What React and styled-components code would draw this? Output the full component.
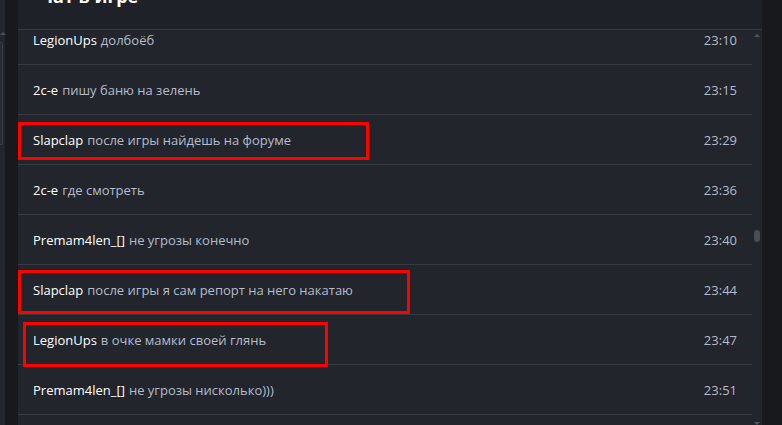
import React from "react";
import styled, { createGlobalStyle } from "styled-components";

const GlobalStyle = createGlobalStyle`
    html, body {
        margin: 0;
        padding: 0;
        background: #18191c;
        overflow: hidden;
    }
    * {
        box-sizing: border-box;
    }
`;

const Screen = styled.div`
    display: flex;
    flex-direction: row;
    width: 782px;
    height: 425px;
    background: #18191c;
    font-family: "Open Sans", "Noto Sans", sans-serif;
`;

const SidePane = styled.div`
    width: 5px;
    height: 100%;
    background: #24262d;
    display: flex;
    flex-direction: column;
    align-items: flex-start;
    padding-top: 32px;
`;

const SideArrow = styled.div`
    width: 0;
    height: 0;
    border-left: 3px solid transparent;
    border-right: 3px solid transparent;
    border-bottom: 3px solid #4b4e55;
`;

const SideThumb = styled.div`
    width: 3px;
    height: 103px;
    margin-top: 7px;
    border: 1px solid #3b3e45;
    border-left: none;
    border-radius: 0 2px 2px 0;
    background: #2a2c33;
`;

const Gap = styled.div`
    width: 13px;
`;

const ChatPanel = styled.div`
    width: 744px;
    height: 100%;
    display: flex;
    flex-direction: column;
    overflow: hidden;
    background: #22252c;
`;

const Header = styled.div`
    height: 30px;
    flex-shrink: 0;
    background: #1f2128;
    border-bottom: 1px solid #373a41;
    padding-left: 22px;
    overflow: hidden;
    position: relative;
    z-index: 1;
`;

const Title = styled.div`
    color: #ffffff;
    font-size: 18px;
    font-weight: 700;
    line-height: 18px;
    margin-top: -13px;
`;

const Body = styled.div`
    flex: 1;
    display: flex;
    flex-direction: row;
    overflow: hidden;
`;

const List = styled.div`
    width: 734px;
    margin-top: -15px;
    display: flex;
    flex-direction: column;
`;

const Row = styled.div`
    position: relative;
    height: 50px;
    flex-shrink: 0;
    display: flex;
    align-items: center;
    justify-content: space-between;
    padding: 0 15px;
    border-bottom: 1px solid #373a41;
    font-size: 13px;
`;

const Message = styled.div`
    color: #b4bccb;
`;

const Author = styled.span`
    color: #ffffff;
    margin-right: 4px;
`;

const Time = styled.div`
    color: #b4bccb;
`;

const Highlight = styled.div`
    position: absolute;
    left: ${(p) => p.$left}px;
    top: ${(p) => p.$top}px;
    width: ${(p) => p.$width}px;
    height: ${(p) => p.$height}px;
    border: 3px solid #ff0000;
    pointer-events: none;
`;

const ScrollTrack = styled.div`
    width: 10px;
    display: flex;
    flex-direction: column;
    align-items: center;
    justify-content: space-between;
    padding: 4px 0 0 0;
    background: #22252c;
`;

const Arrow = styled.div`
    width: 0;
    height: 0;
    border-left: 3px solid transparent;
    border-right: 3px solid transparent;
    ${(p) =>
        p.$down
            ? "border-top: 3px solid #53565d;"
            : "border-bottom: 3px solid #53565d;"}
`;

const Thumb = styled.div`
    width: 6px;
    height: 12px;
    border-radius: 3px;
    background: #4a4d55;
    margin-top: 193px;
`;

const Spacer = styled.div`
    flex: 1;
`;

const messages = [
    { author: "LegionUps", text: "долбоёб", time: "23:10" },
    { author: "2c-e", text: "пишу баню на зелень", time: "23:15" },
    {
        author: "Slapclap",
        text: "после игры найдешь на форуме",
        time: "23:29",
        box: { left: 0, top: 7, width: 351, height: 38 },
    },
    { author: "2c-e", text: "где смотреть", time: "23:36" },
    { author: "Premam4len_[]", text: "не угрозы конечно", time: "23:40" },
    {
        author: "Slapclap",
        text: "после игры я сам репорт на него накатаю",
        time: "23:44",
        box: { left: 0, top: 5, width: 392, height: 44 },
    },
    {
        author: "LegionUps",
        text: "в очке мамки своей глянь",
        time: "23:47",
        box: { left: 5, top: 7, width: 305, height: 45 },
    },
    { author: "Premam4len_[]", text: "не угрозы нисколько)))", time: "23:51" },
    { author: "", text: "", time: "" },
];

export default function App() {
    return (
        <Screen>
            <GlobalStyle />
            <SidePane>
                <SideArrow />
                <SideThumb />
            </SidePane>
            <Gap />
            <ChatPanel>
                <Header>
                    <Title>Чат в игре</Title>
                </Header>
                <Body>
                    <List>
                        {messages.map((m, i) => (
                            <Row key={i}>
                                <Message>
                                    <Author>{m.author}</Author>
                                    {m.text}
                                </Message>
                                <Time>{m.time}</Time>
                                {m.box && (
                                    <Highlight
                                        $left={m.box.left}
                                        $top={m.box.top}
                                        $width={m.box.width}
                                        $height={m.box.height}
                                    />
                                )}
                            </Row>
                        ))}
                    </List>
                    <ScrollTrack>
                        <Arrow />
                        <Thumb />
                        <Spacer />
                        <Arrow $down />
                    </ScrollTrack>
                </Body>
            </ChatPanel>
        </Screen>
    );
}
